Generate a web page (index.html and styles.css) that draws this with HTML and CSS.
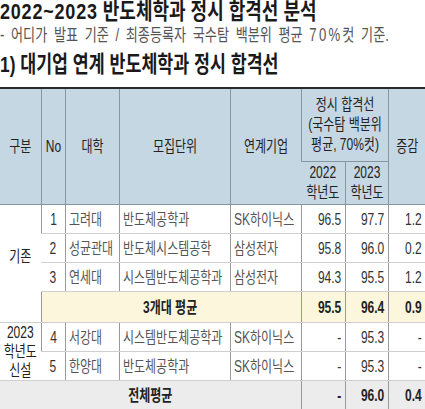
FILE: index.html
```html
<!DOCTYPE html>
<html lang="ko">
<head>
<meta charset="utf-8">
<link rel="stylesheet" href="styles.css">
</head>
<body>
<h1 class="title"><div class="sx"><span class="tn">2022~2023</span> 반도체학과 정시 합격선 분석</div></h1>
<p class="sub"><span class="sx">- 어디가 발표 기준 / 최종등록자 국수탐 백분위 평균 <span class="sn">70%</span>컷 기준.</span></p>
<h2 class="head"><div class="sx">1) 대기업 연계 반도체학과 정시 합격선</div></h2>
<table class="tbl">
  <colgroup>
    <col class="c1"><col class="c2"><col class="c3"><col class="c4"><col class="c5"><col class="c6"><col class="c7"><col class="c8">
  </colgroup>
  <thead>
    <tr class="hr1">
      <th rowspan="2"><div class="sx">구분</div></th>
      <th rowspan="2"><div class="sx">No</div></th>
      <th rowspan="2"><div class="sx">대학</div></th>
      <th rowspan="2"><div class="sx">모집단위</div></th>
      <th rowspan="2"><div class="sx">연계기업</div></th>
      <th colspan="2"><div class="sx">정시 합격선<br>(국수탐 백분위<br>평균, 70%컷)</div></th>
      <th rowspan="2"><div class="sx">증감</div></th>
    </tr>
    <tr class="hr2">
      <th><div class="sx">2022<br>학년도</div></th>
      <th><div class="sx">2023<br>학년도</div></th>
    </tr>
  </thead>
  <tbody>
    <tr>
      <td rowspan="4" class="grp g1"><div class="sx">기존</div></td>
      <td class="no"><div class="sx">1</div></td>
      <td class="tx"><div class="sx">고려대</div></td>
      <td class="tx"><div class="sx">반도체공학과</div></td>
      <td class="tx"><div class="sx">SK하이닉스</div></td>
      <td class="num"><div class="sx">96.5</div></td>
      <td class="num"><div class="sx">97.7</div></td>
      <td class="num"><div class="sx">1.2</div></td>
    </tr>
    <tr>
      <td class="no"><div class="sx">2</div></td>
      <td class="tx"><div class="sx">성균관대</div></td>
      <td class="tx"><div class="sx">반도체시스템공학</div></td>
      <td class="tx"><div class="sx">삼성전자</div></td>
      <td class="num"><div class="sx">95.8</div></td>
      <td class="num"><div class="sx">96.0</div></td>
      <td class="num"><div class="sx">0.2</div></td>
    </tr>
    <tr>
      <td class="no"><div class="sx">3</div></td>
      <td class="tx"><div class="sx">연세대</div></td>
      <td class="tx"><div class="sx">시스템반도체공학과</div></td>
      <td class="tx"><div class="sx">삼성전자</div></td>
      <td class="num"><div class="sx">94.3</div></td>
      <td class="num"><div class="sx">95.5</div></td>
      <td class="num"><div class="sx">1.2</div></td>
    </tr>
    <tr class="avg">
      <td class="ae"></td>
      <td class="ae nb"></td>
      <td class="ae nb albl"><div class="sx">3개대 평균</div></td>
      <td class="ae nb"></td>
      <td class="num"><div class="sx">95.5</div></td>
      <td class="num"><div class="sx">96.4</div></td>
      <td class="num"><div class="sx">0.9</div></td>
    </tr>
    <tr>
      <td rowspan="2" class="grp"><div class="sx">2023<br>학년도<br>신설</div></td>
      <td class="no"><div class="sx">4</div></td>
      <td class="tx"><div class="sx">서강대</div></td>
      <td class="tx"><div class="sx">시스템반도체공학과</div></td>
      <td class="tx"><div class="sx">SK하이닉스</div></td>
      <td class="num"><div class="sx">-</div></td>
      <td class="num"><div class="sx">95.3</div></td>
      <td class="num"><div class="sx">-</div></td>
    </tr>
    <tr>
      <td class="no"><div class="sx">5</div></td>
      <td class="tx"><div class="sx">한양대</div></td>
      <td class="tx"><div class="sx">반도체공학과</div></td>
      <td class="tx"><div class="sx">SK하이닉스</div></td>
      <td class="num"><div class="sx">-</div></td>
      <td class="num"><div class="sx">95.3</div></td>
      <td class="num"><div class="sx">-</div></td>
    </tr>
    <tr class="tot">
      <td colspan="5" class="lbl l5"><div class="sx">전체평균</div></td>
      <td class="num"><div class="sx">-</div></td>
      <td class="num"><div class="sx">96.0</div></td>
      <td class="num"><div class="sx">0.4</div></td>
    </tr>
  </tbody>
</table>
</body>
</html>
```

FILE: styles.css
```css
html, body {
  margin: 0;
  padding: 0;
  background: #ffffff;
}
body {
  width: 425px;
  height: 409px;
  overflow: hidden;
  font-family: "Liberation Sans", "Noto Sans CJK KR", sans-serif;
  color: #1e1e1e;
}
.sx {
  display: block;
  width: 133.333%;
  transform: scaleX(0.75);
  transform-origin: 0 0;
  white-space: nowrap;
}
.title {
  margin: 0;
  font-size: 22.5px;
  line-height: 24px;
  font-weight: bold;
  color: #1a1a1a;
}
.title .sx {
  width: 125%;
  transform: scaleX(0.8);
}
.tn {
  letter-spacing: 1px;
}
.sub {
  margin: 0;
  font-size: 17.5px;
  line-height: 22px;
  color: #555555;
  word-spacing: 4px;
}
.sn {
  letter-spacing: 3px;
}
.head {
  margin: 4px 0 0 0;
  font-size: 22.5px;
  line-height: 30px;
  font-weight: bold;
  color: #1a1a1a;
}
.head .sx {
  width: 130%;
  transform: scaleX(0.77);
}
.tbl {
  margin-top: 7px;
  width: 425px;
  table-layout: fixed;
  border-collapse: collapse;
  font-size: 16px;
}
.c1 { width: 41px; }
.c2 { width: 24px; }
.c3 { width: 54px; }
.c4 { width: 111px; }
.c5 { width: 71px; }
.c6 { width: 44px; }
.c7 { width: 43px; }
.c8 { width: 37px; }
.tbl th, .tbl td {
  padding: 0;
  overflow: visible;
}
.tbl thead tr:first-child th {
  border-top: 2px solid #2a2a2a;
}
.tbl th {
  background: #c5d7e2;
  font-weight: normal;
  color: #222222;
  text-align: center;
  vertical-align: middle;
  line-height: 20px;
  border-left: 1px solid #8797a2;
  border-bottom: 1px solid #8797a2;
}
.tbl th:first-child {
  border-left: none;
}
.hr1 th {
  height: 72px;
}
.hr2 th {
  height: 42px;
  border-left: 1px solid #8797a2;
}
.tbl td {
  height: 28px;
  line-height: 19px;
  vertical-align: middle;
  border-left: 1px solid #9a9a9a;
  border-bottom: 1px solid #cfcfcf;
  color: #333333;
}
.tbl tr td:first-child {
  border-left: none;
}
.tbl td.grp {
  text-align: center;
  color: #222222;
  border-bottom: 1px solid #cfcfcf;
}
.tbl td.g1 .sx {
  padding-bottom: 14px;
}
.tbl td.no {
  text-align: center;
  border-left: 1px solid #9a9a9a;
  color: #333333;
}
.tbl td.tx {
  text-align: left;
  color: #555555;
}
.tbl td.tx .sx {
  padding-left: 4px;
}
.tbl td.num {
  text-align: right;
}
.tbl td.num .sx {
  box-sizing: border-box;
  padding-right: 5px;
}
.tbl tr.avg td {
  height: 30px;
  background: #fcf6dc;
  font-weight: bold;
  color: #222222;
}
.tbl tr.avg td.ae {
  border-left: 1px solid #9a9a9a;
}
.tbl tr.avg td.nb {
  border-left: none;
}
.tbl td.albl {
  text-align: left;
}
.tbl td.albl .sx {
  padding-left: 32px;
}
.tbl td.lbl {
  text-align: left;
}
.tbl td.l5 .sx {
  padding-left: 171px;
}
.tbl tr.tot td {
  background: #ececec;
  font-weight: bold;
  color: #222222;
  border-bottom: 2px solid #2a2a2a;
}
```
